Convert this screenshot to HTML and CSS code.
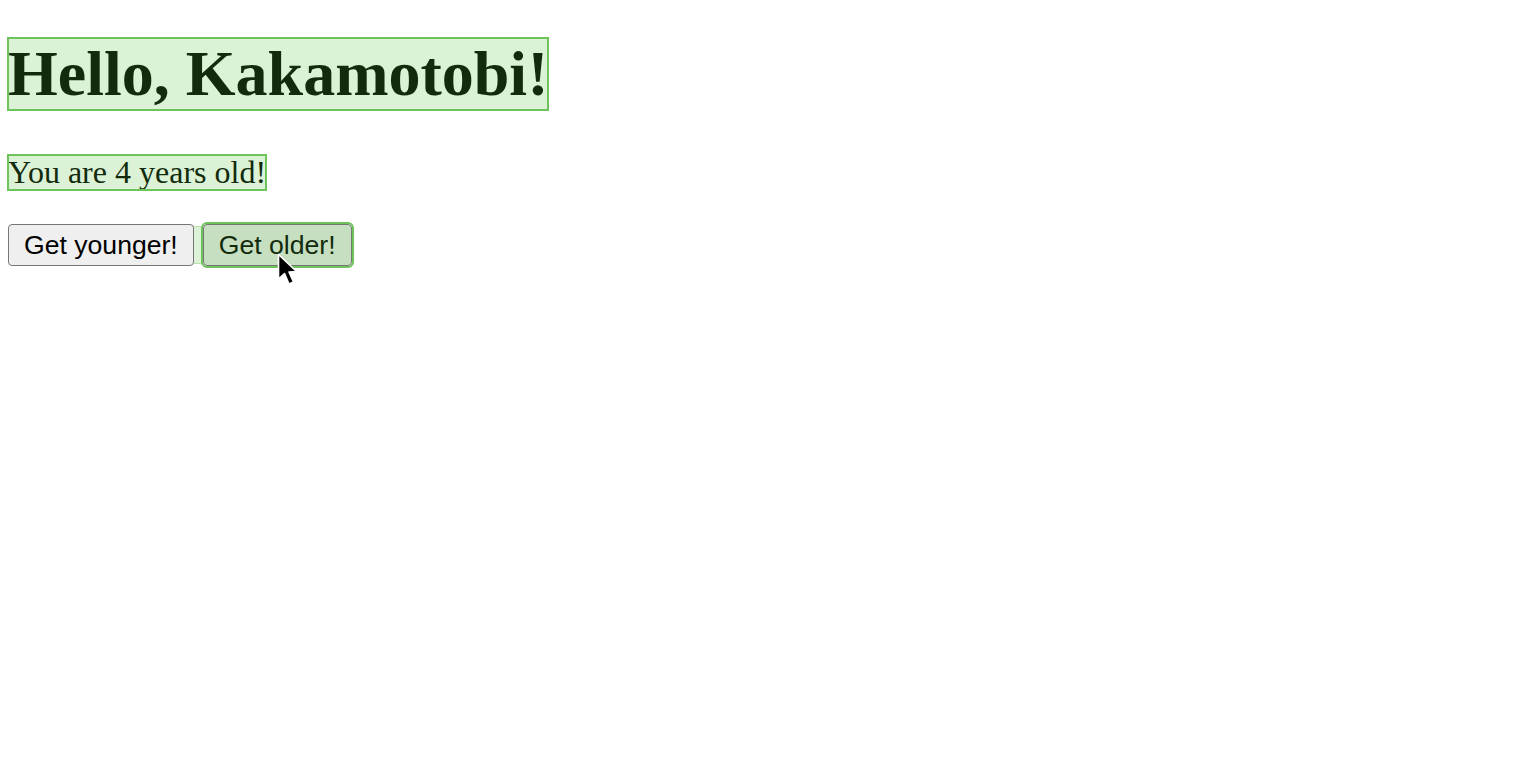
FILE: index.html
```html
<!DOCTYPE html>
<html>
<head>
<meta charset="utf-8">
<link rel="stylesheet" href="styles.css">
</head>
<body>
<h1 class="title hl">Hello, Kakamotobi!</h1>
<p class="age hl">You are 4 years old!</p>
<div class="actions">
  <button class="btn">Get younger!</button>
  <span class="gap-hl"></span>
  <button class="btn btn-hover">Get older!</button>
</div>
<svg class="cursor" width="24" height="36" viewBox="0 0 24 36">
  <path d="M1.5 1.5 L1.5 26 L7.5 20.5 L12 31 L16.5 29 L12 19 L19.5 18.5 Z" fill="#000" stroke="#fff" stroke-width="1.6" stroke-linejoin="round"/>
</svg>
</body>
</html>
```

FILE: styles.css
```css
html, body {
  margin: 0;
  background: #fff;
}
html {
  height: 100%;
}
body {
  box-sizing: border-box;
  min-height: 100%;
  padding: 8px;
  font-family: "Liberation Serif", "Times New Roman", serif;
  color: #122b0c;
  position: relative;
}
.hl {
  background: #dcf2d6;
  outline: 2px solid #6cc45a;
  outline-offset: -1px;
  width: fit-content;
}
.title {
  margin: 30px 0 0;
  font-size: 64px;
  font-weight: bold;
  line-height: 72px;
}
.age {
  margin: 45px 0 0;
  font-size: 32px;
  line-height: 35px;
}
.actions {
  margin-top: 34px;
  display: flex;
  align-items: center;
}
.btn {
  font-family: "Liberation Sans", Arial, sans-serif;
  font-size: 26.6px;
  height: 42px;
  padding: 0 15px;
  border: 1.5px solid #767676;
  border-radius: 4px;
  background: #efefef;
  color: #000;
  margin: 0;
}
.gap-hl {
  width: 9px;
  height: 38px;
  background: #dcf2d6;
  border-top: 1px solid #b7e2ac;
  border-bottom: 1px solid #b7e2ac;
  box-sizing: border-box;
}
.btn-hover {
  background: #c6dfc0;
  color: #122b0c;
  outline: 2px solid #6cc45a;
  outline-offset: 0;
}
.cursor {
  position: absolute;
  left: 277px;
  top: 253px;
  z-index: 5;
}
```
